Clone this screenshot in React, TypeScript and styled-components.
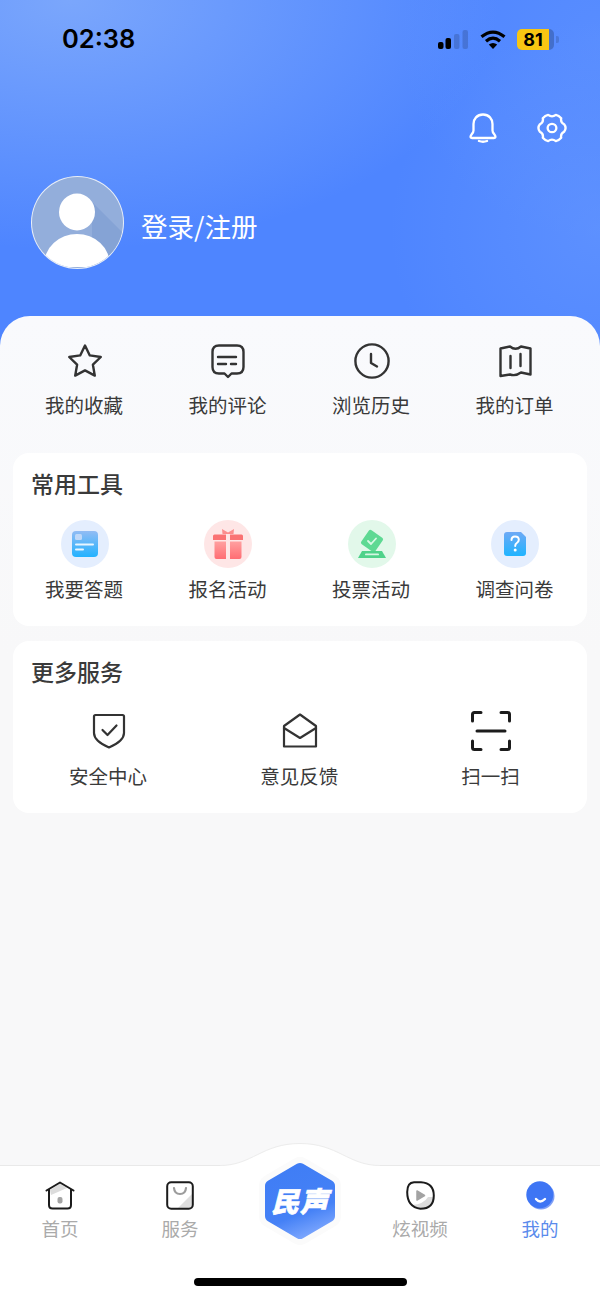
import React from 'react'
import styled, { createGlobalStyle } from 'styled-components'

const GlobalStyle = createGlobalStyle`
  html, body {
    margin: 0;
    padding: 0;
    background: #f8f8f9;
  }
  body {
    font-family: "Noto Sans CJK SC", "Noto Sans", sans-serif;
  }
`

const Page = styled.div`
  width: 600px;
  height: 1299px;
  display: flex;
  flex-direction: column;
  overflow: hidden;
  background:
    radial-gradient(ellipse 430px 250px at 70px 0, rgba(150, 187, 250, 0.62), rgba(150, 187, 250, 0) 100%) no-repeat,
    radial-gradient(circle at 600px 230px, rgba(120, 165, 255, 0.35), rgba(120, 165, 255, 0) 210px) no-repeat,
    radial-gradient(circle at 600px 40px, rgba(120, 165, 255, 0.25), rgba(120, 165, 255, 0) 200px) no-repeat,
    linear-gradient(#4e85ff, #4e85ff);
`

const Hero = styled.header`
  height: 316px;
  flex: none;
  box-sizing: border-box;
  padding-top: 26px;
`

const StatusBar = styled.div`
  height: 26px;
  display: flex;
  align-items: center;
  justify-content: space-between;
  padding: 0 41px 0 62px;
`

const Clock = styled.span`
  font-family: "Inter", "Liberation Sans", sans-serif;
  font-size: 25.5px;
  font-weight: 600;
  line-height: 26px;
  color: #000;
`

const StatusIcons = styled.div`
  display: flex;
  align-items: center;
  gap: 11px;
`

const Battery = styled.div`
  position: relative;
  width: 42px;
  height: 21px;
  display: flex;
`

const BatteryFill = styled.div`
  width: 32px;
  height: 21px;
  border-radius: 5px 0 0 5px;
  background: #f8c612;
  font-family: "Inter", "Liberation Sans", sans-serif;
  font-size: 18px;
  font-weight: 700;
  line-height: 21px;
  text-align: center;
  color: #000;
`

const BatteryRest = styled.div`
  width: 5px;
  height: 21px;
  border-radius: 0 5px 5px 0;
  background: rgba(45, 75, 140, 0.45);
`

const BatteryNub = styled.div`
  width: 3px;
  height: 7px;
  margin: 7px 0 0 2px;
  border-radius: 0 2px 2px 0;
  background: rgba(45, 75, 140, 0.3);
`

const HeroActions = styled.div`
  display: flex;
  justify-content: flex-end;
  align-items: center;
  gap: 39px;
  padding: 61px 32px 0 0;
`

const Profile = styled.div`
  display: flex;
  align-items: center;
  gap: 17px;
  margin-top: 33px;
  padding-left: 31px;
`

const AvatarFrame = styled.div`
  width: 93px;
  height: 93px;
  flex: none;
  box-sizing: border-box;
  border-radius: 50%;
  border: 1.5px solid rgba(255, 255, 255, 0.8);
  overflow: hidden;
  background: #93aedb;
  svg {
    display: block;
  }
`

const LoginText = styled.span`
  font-size: 26.5px;
  line-height: 36px;
  color: #fff;
  margin-top: 6px;
`

const Sheet = styled.main`
  flex: 1;
  box-sizing: border-box;
  padding: 0 13px;
  border-radius: 30px 30px 0 0;
  background: linear-gradient(#f9fafd, #f8f8f9 340px);
`

const ShortcutRow = styled.div`
  display: grid;
  grid-template-columns: repeat(4, 1fr);
  padding: 27px 0 34px;
`

const Entry = styled.div`
  display: flex;
  flex-direction: column;
  align-items: center;
`

const EntryIcon = styled.div<{ $size: number }>`
  height: ${p => p.$size}px;
  display: flex;
  align-items: center;
  justify-content: center;
  svg {
    display: block;
  }
`

const EntryLabel = styled.span<{ $gap: number }>`
  margin-top: ${p => p.$gap}px;
  padding-right: 1.5px;
  font-size: 19.5px;
  line-height: 28px;
  color: #3a3a3a;
  white-space: nowrap;
`

const Card = styled.section`
  margin-bottom: 15px;
  padding: 14px 0 23px;
  border-radius: 16px;
  background: #fff;
`

const CardTitle = styled.h2`
  margin: 0;
  padding-left: 18px;
  font-size: 23px;
  font-weight: 500;
  line-height: 32px;
  color: #3a3a3a;
`

const CardGrid = styled.div<{ $cols: number; $top: number }>`
  display: grid;
  grid-template-columns: repeat(${p => p.$cols}, 1fr);
  margin-top: ${p => p.$top}px;
`

const ToolCircle = styled.div<{ $bg: string }>`
  width: 48px;
  height: 48px;
  border-radius: 50%;
  display: flex;
  align-items: center;
  justify-content: center;
  background: ${p => p.$bg};
  svg {
    display: block;
  }
`

const TabBar = styled.nav`
  position: relative;
  height: 134px;
  flex: none;
  box-sizing: border-box;
  padding-top: 15px;
  display: grid;
  grid-template-columns: repeat(5, 1fr);
  align-content: start;
  background: #fff;
  border-top: 1px solid #e9e9e9;
`

const TabItem = styled.div`
  display: flex;
  flex-direction: column;
  align-items: center;
  svg {
    display: block;
  }
`

const TabLabel = styled.span<{ $active?: boolean }>`
  margin-top: 5px;
  font-size: 18.5px;
  line-height: 26px;
  color: ${p => (p.$active ? '#5a8bec' : '#aaa')};
  white-space: nowrap;
`

const Bump = styled.svg`
  position: absolute;
  left: 220px;
  top: -24px;
`

const LogoBadge = styled.div`
  position: absolute;
  left: 257px;
  top: -11px;
  width: 86px;
  height: 92px;
  display: flex;
  align-items: center;
  justify-content: center;
`

const LogoShape = styled.svg`
  position: absolute;
  inset: 0;
`

const LogoText = styled.span`
  position: relative;
  top: -1px;
  font-size: 28px;
  font-weight: 900;
  font-style: italic;
  line-height: 34px;
  letter-spacing: 1px;
  color: #fff;
  -webkit-text-stroke: 0.6px #fff;
`

const HomeIndicator = styled.div`
  position: absolute;
  left: 194px;
  bottom: 13px;
  width: 213px;
  height: 8px;
  border-radius: 4px;
  background: #000;
`

const ink = '#333'

const StarIcon = () => (
  <svg width="36" height="36" viewBox="0 0 36 36" fill="none" stroke={ink} strokeWidth="2.4" strokeLinejoin="round">
    <path d="M18 2.5 L22.8 12.4 L33.8 14 L25.9 21.7 L27.8 32.6 L18 27.4 L8.2 32.6 L10.1 21.7 L2.2 14 L13.2 12.4 Z" />
  </svg>
)

const CommentIcon = () => (
  <svg width="34" height="35" viewBox="0 0 34 35" fill="none" stroke={ink} strokeWidth="2.4" strokeLinecap="round" strokeLinejoin="round">
    <path d="M8 1.500 H26 Q32.500 1.500 32.500 8 V23 Q32.500 29.500 26 29.500 H20.500 L17 33 L13.500 29.500 H8 Q1.500 29.500 1.500 23 V8 Q1.500 1.500 8 1.500 Z" />
    <path d="M7 13 H25 M7 20 H15 M20 20 H25" />
  </svg>
)

const HistoryIcon = () => (
  <svg width="36" height="36" viewBox="0 0 36 36" fill="none" stroke={ink} strokeWidth="2.4" strokeLinecap="round" strokeLinejoin="round">
    <circle cx="18" cy="18" r="16.600" />
    <path d="M17 11 V20 L23 23.500" />
  </svg>
)

const OrderIcon = () => (
  <svg width="33" height="33" viewBox="0 0 33 33" fill="none" stroke={ink} strokeWidth="2.400" strokeLinecap="round" strokeLinejoin="round">
    <path d="M1.500 3.500 L11 1.500 Q16.500 6 22 1.500 L31.500 3.500 V29.500 L22 27.500 Q16.500 31.500 11 29.500 L1.500 31 Z" />
    <path d="M11.500 11 V23 M21.500 9 V21" />
  </svg>
)

const QuizIcon = () => (
  <svg width="26" height="26" viewBox="0 0 26 26">
    <defs>
      <linearGradient id="quizFill" x1="0" y1="0" x2="0" y2="1">
        <stop offset="0" stopColor="#92bcf4" />
        <stop offset="1" stopColor="#22b2ff" />
      </linearGradient>
    </defs>
    <rect x="0" y="0" width="26" height="26" rx="4" fill="url(#quizFill)" />
    <rect x="3" y="3" width="7" height="6" rx="1.500" fill="#bfd8f8" />
    <rect x="3" y="12.500" width="19" height="2" rx="1" fill="#e8f6ff" />
    <rect x="3" y="17.500" width="9" height="2" rx="1" fill="#e8f6ff" />
  </svg>
)

const GiftIcon = () => (
  <svg width="30" height="30" viewBox="0 0 30 30">
    <defs>
      <linearGradient id="giftFill" x1="0" y1="0" x2="0" y2="1">
        <stop offset="0" stopColor="#ffa0a0" />
        <stop offset="1" stopColor="#ff6d73" />
      </linearGradient>
    </defs>
    <path d="M9 0 L15 3.500 L21 0 L20.500 5 H9.500 Z" fill="#fb8d8d" />
    <path d="M0 7 Q0 5.500 1.500 5.500 H13 V11 H0 Z M17 5.500 H28.500 Q30 5.500 30 7 V11 H17 Z" fill="#fa7273" />
    <path d="M1.500 12.500 H13 V30 H3.500 Q1.500 30 1.500 28 Z M17 12.500 H28.500 V28 Q28.500 30 26.500 30 H17 Z" fill="url(#giftFill)" />
  </svg>
)

const VoteIcon = () => (
  <svg width="30" height="30" viewBox="0 0 30 30">
    <rect x="6.500" y="3.500" width="17" height="17" rx="2" fill="#5ed993" transform="rotate(35 15 12)" />
    <path d="M11 12 L14 15 L19 9.500" fill="none" stroke="#d9f8e4" strokeWidth="1.800" strokeLinecap="round" strokeLinejoin="round" />
    <path d="M5 22 H25 L29 29 H1 Z" fill="#4fd28a" />
    <rect x="8" y="24.500" width="14" height="1.800" rx="0.900" fill="#d7f6e3" />
  </svg>
)

const SurveyIcon = () => (
  <svg width="22" height="24" viewBox="0 0 22 24">
    <defs>
      <linearGradient id="surveyFill" x1="0" y1="0" x2="0" y2="1">
        <stop offset="0" stopColor="#6ea9f5" />
        <stop offset="1" stopColor="#1fb4ff" />
      </linearGradient>
    </defs>
    <path d="M3 0 H17 L22 5 V21 Q22 24 19 24 H3 Q0 24 0 21 V3 Q0 0 3 0 Z" fill="url(#surveyFill)" />
    <path d="M7.500 8 Q7.500 4.500 11 4.500 Q14.800 4.500 14.800 7.800 Q14.800 9.800 12.800 11 Q11.200 12 11.200 14" fill="none" stroke="#fff" strokeWidth="2" strokeLinecap="round" />
    <circle cx="11.200" cy="18" r="1.500" fill="#fff" />
  </svg>
)

const ShieldIcon = () => (
  <svg width="34" height="36" viewBox="0 0 34 36" fill="none" stroke={ink} strokeWidth="2.200" strokeLinecap="round" strokeLinejoin="round">
    <path d="M3.500 2 H30.500 Q32 2 32 3.500 V20 Q32 28 17 34.500 Q2 28 2 20 V3.500 Q2 2 3.500 2 Z" />
    <path d="M10.500 17 L15.500 22 L24.500 12.500" />
  </svg>
)

const MailIcon = () => (
  <svg width="36" height="36" viewBox="0 0 36 36" fill="none" stroke={ink} strokeWidth="2.200" strokeLinecap="round" strokeLinejoin="round">
    <path d="M2 13 L18 1.500 L34 13 V33.500 H2 Z" />
    <path d="M2 15 L18 25 L34 15" />
  </svg>
)

const ScanIcon = () => (
  <svg width="40" height="40" viewBox="0 0 40 40" fill="none" stroke="#1c1c1c" strokeWidth="3" strokeLinecap="round" strokeLinejoin="round">
    <path d="M1.500 10 V3.500 Q1.500 1.500 3.500 1.500 H10 M30 1.500 H36.500 Q38.500 1.500 38.500 3.500 V10" />
    <path d="M1.500 30 V36.500 Q1.500 38.500 3.500 38.500 H10 M30 38.500 H36.500 Q38.500 38.500 38.500 36.500 V30" />
    <path d="M6 20 H34" />
  </svg>
)

const HomeTab = () => (
  <svg width="30" height="29" viewBox="0 0 30 29">
    <path d="M5 9 L15 2.500 L22 7 L6 14 Z" fill="#dcdcdc" />
    <rect x="12.500" y="16" width="5" height="6.500" rx="2" fill="#a5a5a5" />
    <path d="M1.500 9.500 L15 1.500 L28.500 9.500 M4 8.500 V24 Q4 27.500 7.500 27.500 H22.500 Q26 27.500 26 24 V8.500" fill="none" stroke="#1b1b1b" strokeWidth="2" strokeLinecap="round" strokeLinejoin="round" />
  </svg>
)

const BagTab = () => (
  <svg width="28" height="29" viewBox="0 0 28 29">
    <path d="M26 13 V24 Q26 27 23 27 H12 Z" fill="#dedede" />
    <rect x="1.200" y="1.200" width="25.600" height="26.600" rx="4" fill="none" stroke="#1b1b1b" strokeWidth="2" />
    <path d="M8 7 Q8.500 13 14 13 Q19.500 13 20 7" fill="none" stroke="#9c9c9c" strokeWidth="2.200" strokeLinecap="round" />
  </svg>
)

const VideoTab = () => (
  <svg width="29" height="29" viewBox="0 0 29 29">
    <path d="M27 16 Q27 27 15 27.500 Q9 27.500 6 24 Q18 23 22 16 Z" fill="#dcdcdc" />
    <path d="M11 10 L18.500 14.500 L11 19 Z" fill="#a3a3a3" stroke="#a3a3a3" strokeWidth="1.500" strokeLinejoin="round" />
    <path d="M8 1.200 H15 Q27.800 2 27.800 14.500 Q27.800 27.800 14.500 27.800 Q1.200 26 1.200 11 Q1.200 1.500 8 1.200 Z" fill="none" stroke="#1b1b1b" strokeWidth="2" />
  </svg>
)

const MineTab = () => (
  <svg width="29" height="29" viewBox="0 0 29 29">
    <circle cx="15" cy="15" r="13.500" fill="#7f9ff5" />
    <circle cx="13.800" cy="13.800" r="13.500" fill="#3e75f4" />
    <path d="M10 18 Q14 23 19 18" fill="none" stroke="#fff" strokeWidth="2.400" strokeLinecap="round" />
  </svg>
)

const shortcuts = [
  { label: '我的收藏', icon: <StarIcon /> },
  { label: '我的评论', icon: <CommentIcon /> },
  { label: '浏览历史', icon: <HistoryIcon /> },
  { label: '我的订单', icon: <OrderIcon /> },
]

const tools = [
  { label: '我要答题', bg: '#e4eefe', icon: <QuizIcon /> },
  { label: '报名活动', bg: '#fee6e6', icon: <GiftIcon /> },
  { label: '投票活动', bg: '#e2f8ea', icon: <VoteIcon /> },
  { label: '调查问卷', bg: '#e4eefe', icon: <SurveyIcon /> },
]

const services = [
  { label: '安全中心', icon: <ShieldIcon /> },
  { label: '意见反馈', icon: <MailIcon /> },
  { label: '扫一扫', icon: <ScanIcon /> },
]

const App = () => {
  return (
    <Page>
      <GlobalStyle />
      <Hero>
        <StatusBar>
          <Clock>02:38</Clock>
          <StatusIcons>
            <svg width="31" height="19" viewBox="0 0 31 19">
              <rect x="0" y="12" width="5.500" height="7" rx="2" fill="#000" />
              <rect x="7.500" y="8" width="5.500" height="11" rx="2" fill="#000" />
              <rect x="16" y="4" width="5.500" height="15" rx="2" fill="#2d4b8c" opacity="0.35" />
              <rect x="24.500" y="0" width="5.500" height="19" rx="2" fill="#2d4b8c" opacity="0.35" />
            </svg>
            <svg width="26" height="19" viewBox="0 0 26 19" fill="none" stroke="#000" strokeWidth="3.200">
              <path d="M1.500 6.800 Q13 -2.600 24.500 6.800" />
              <path d="M6 11.200 Q13 5.200 20 11.200" />
              <path d="M13 19 L8.800 14.500 Q13 11.400 17.200 14.500 Z" fill="#000" stroke="none" />
            </svg>
            <Battery>
              <BatteryFill>81</BatteryFill>
              <BatteryRest />
              <BatteryNub />
            </Battery>
          </StatusIcons>
        </StatusBar>
        <HeroActions>
          <svg width="28" height="30" viewBox="0 0 28 30" fill="none" stroke="#fff" strokeWidth="2.300" strokeLinecap="round" strokeLinejoin="round">
            <path d="M14 1.500 C8 1.500 4.500 6 4.500 11 V17.500 C4.500 20.500 1.500 21.500 1.500 24 Q1.500 25 3 25 H25 Q26.500 25 26.500 24 C26.500 21.500 23.500 20.500 23.500 17.500 V11 C23.500 6 20 1.500 14 1.500 Z" />
            <path d="M10 28 Q14 29.500 18 28" />
          </svg>
          <svg width="32" height="30" viewBox="0 0 33 32" preserveAspectRatio="none" fill="none" stroke="#fff" strokeWidth="2.400" strokeLinejoin="round">
            <path d="M12.500 2 Q16.500 5 20.500 2 Q23.500 2.500 26 5.500 Q25 10 29 12 Q32 16 29 20 Q25 22 26 26.500 Q23.500 29.500 20.500 30 Q16.500 27 12.500 30 Q9.500 29.500 7 26.500 Q8 22 4 20 Q1 16 4 12 Q8 10 7 5.500 Q9.500 2.500 12.500 2 Z" />
            <circle cx="16.500" cy="16" r="4.500" />
          </svg>
        </HeroActions>
        <Profile>
          <AvatarFrame>
            <svg width="90" height="90" viewBox="0 0 90 90">
              <path d="M60 25 L90 55 V90 H60 Z" fill="#7f9ed3" opacity="0.7" />
              <ellipse cx="45" cy="35" rx="18" ry="18.500" fill="#fff" />
              <ellipse cx="45" cy="88" rx="33" ry="31" fill="#fff" />
            </svg>
          </AvatarFrame>
          <LoginText>登录/注册</LoginText>
        </Profile>
      </Hero>
      <Sheet>
        <ShortcutRow>
          {shortcuts.map(item => (
            <Entry key={item.label}>
              <EntryIcon $size={36}>{item.icon}</EntryIcon>
              <EntryLabel $gap={12}>{item.label}</EntryLabel>
            </Entry>
          ))}
        </ShortcutRow>
        <Card>
          <CardTitle>常用工具</CardTitle>
          <CardGrid $cols={4} $top={21}>
            {tools.map(item => (
              <Entry key={item.label}>
                <ToolCircle $bg={item.bg}>{item.icon}</ToolCircle>
                <EntryLabel $gap={7}>{item.label}</EntryLabel>
              </Entry>
            ))}
          </CardGrid>
        </Card>
        <Card>
          <CardTitle>更多服务</CardTitle>
          <CardGrid $cols={3} $top={24}>
            {services.map(item => (
              <Entry key={item.label}>
                <EntryIcon $size={40}>{item.icon}</EntryIcon>
                <EntryLabel $gap={11}>{item.label}</EntryLabel>
              </Entry>
            ))}
          </CardGrid>
        </Card>
      </Sheet>
      <TabBar>
        <Bump width="160" height="26" viewBox="0 0 160 26">
          <path d="M0 23.500 C32 23.500 42 1.500 80 1.500 C118 1.500 128 23.500 160 23.500 V26 H0 Z" fill="#fff" />
          <path d="M0 23.500 C32 23.500 42 1.500 80 1.500 C118 1.500 128 23.500 160 23.500" fill="none" stroke="#ececec" />
        </Bump>
        <TabItem>
          <HomeTab />
          <TabLabel>首页</TabLabel>
        </TabItem>
        <TabItem>
          <BagTab />
          <TabLabel>服务</TabLabel>
        </TabItem>
        <span />
        <TabItem>
          <VideoTab />
          <TabLabel>炫视频</TabLabel>
        </TabItem>
        <TabItem>
          <MineTab />
          <TabLabel $active>我的</TabLabel>
        </TabItem>
        <LogoBadge>
          <LogoShape width="86" height="92" viewBox="0 0 86 92">
            <defs>
              <linearGradient id="logoFill" gradientUnits="userSpaceOnUse" x1="30" y1="8" x2="58" y2="84">
                <stop offset="0" stopColor="#3f7df5" />
                <stop offset="0.65" stopColor="#4581f6" />
                <stop offset="1" stopColor="#86adff" />
              </linearGradient>
            </defs>
            <path d="M43 14 L72 31 V61 L43 78 L14 61 V31 Z" fill="#fff" stroke="#fbfbfb" strokeWidth="24" strokeLinejoin="round" />
            <path d="M43 14 L72 31 V61 L43 78 L14 61 V31 Z" fill="url(#logoFill)" stroke="url(#logoFill)" strokeWidth="12" strokeLinejoin="round" />
          </LogoShape>
          <LogoText>民声</LogoText>
        </LogoBadge>
        <HomeIndicator />
      </TabBar>
    </Page>
  )
}

export default App
